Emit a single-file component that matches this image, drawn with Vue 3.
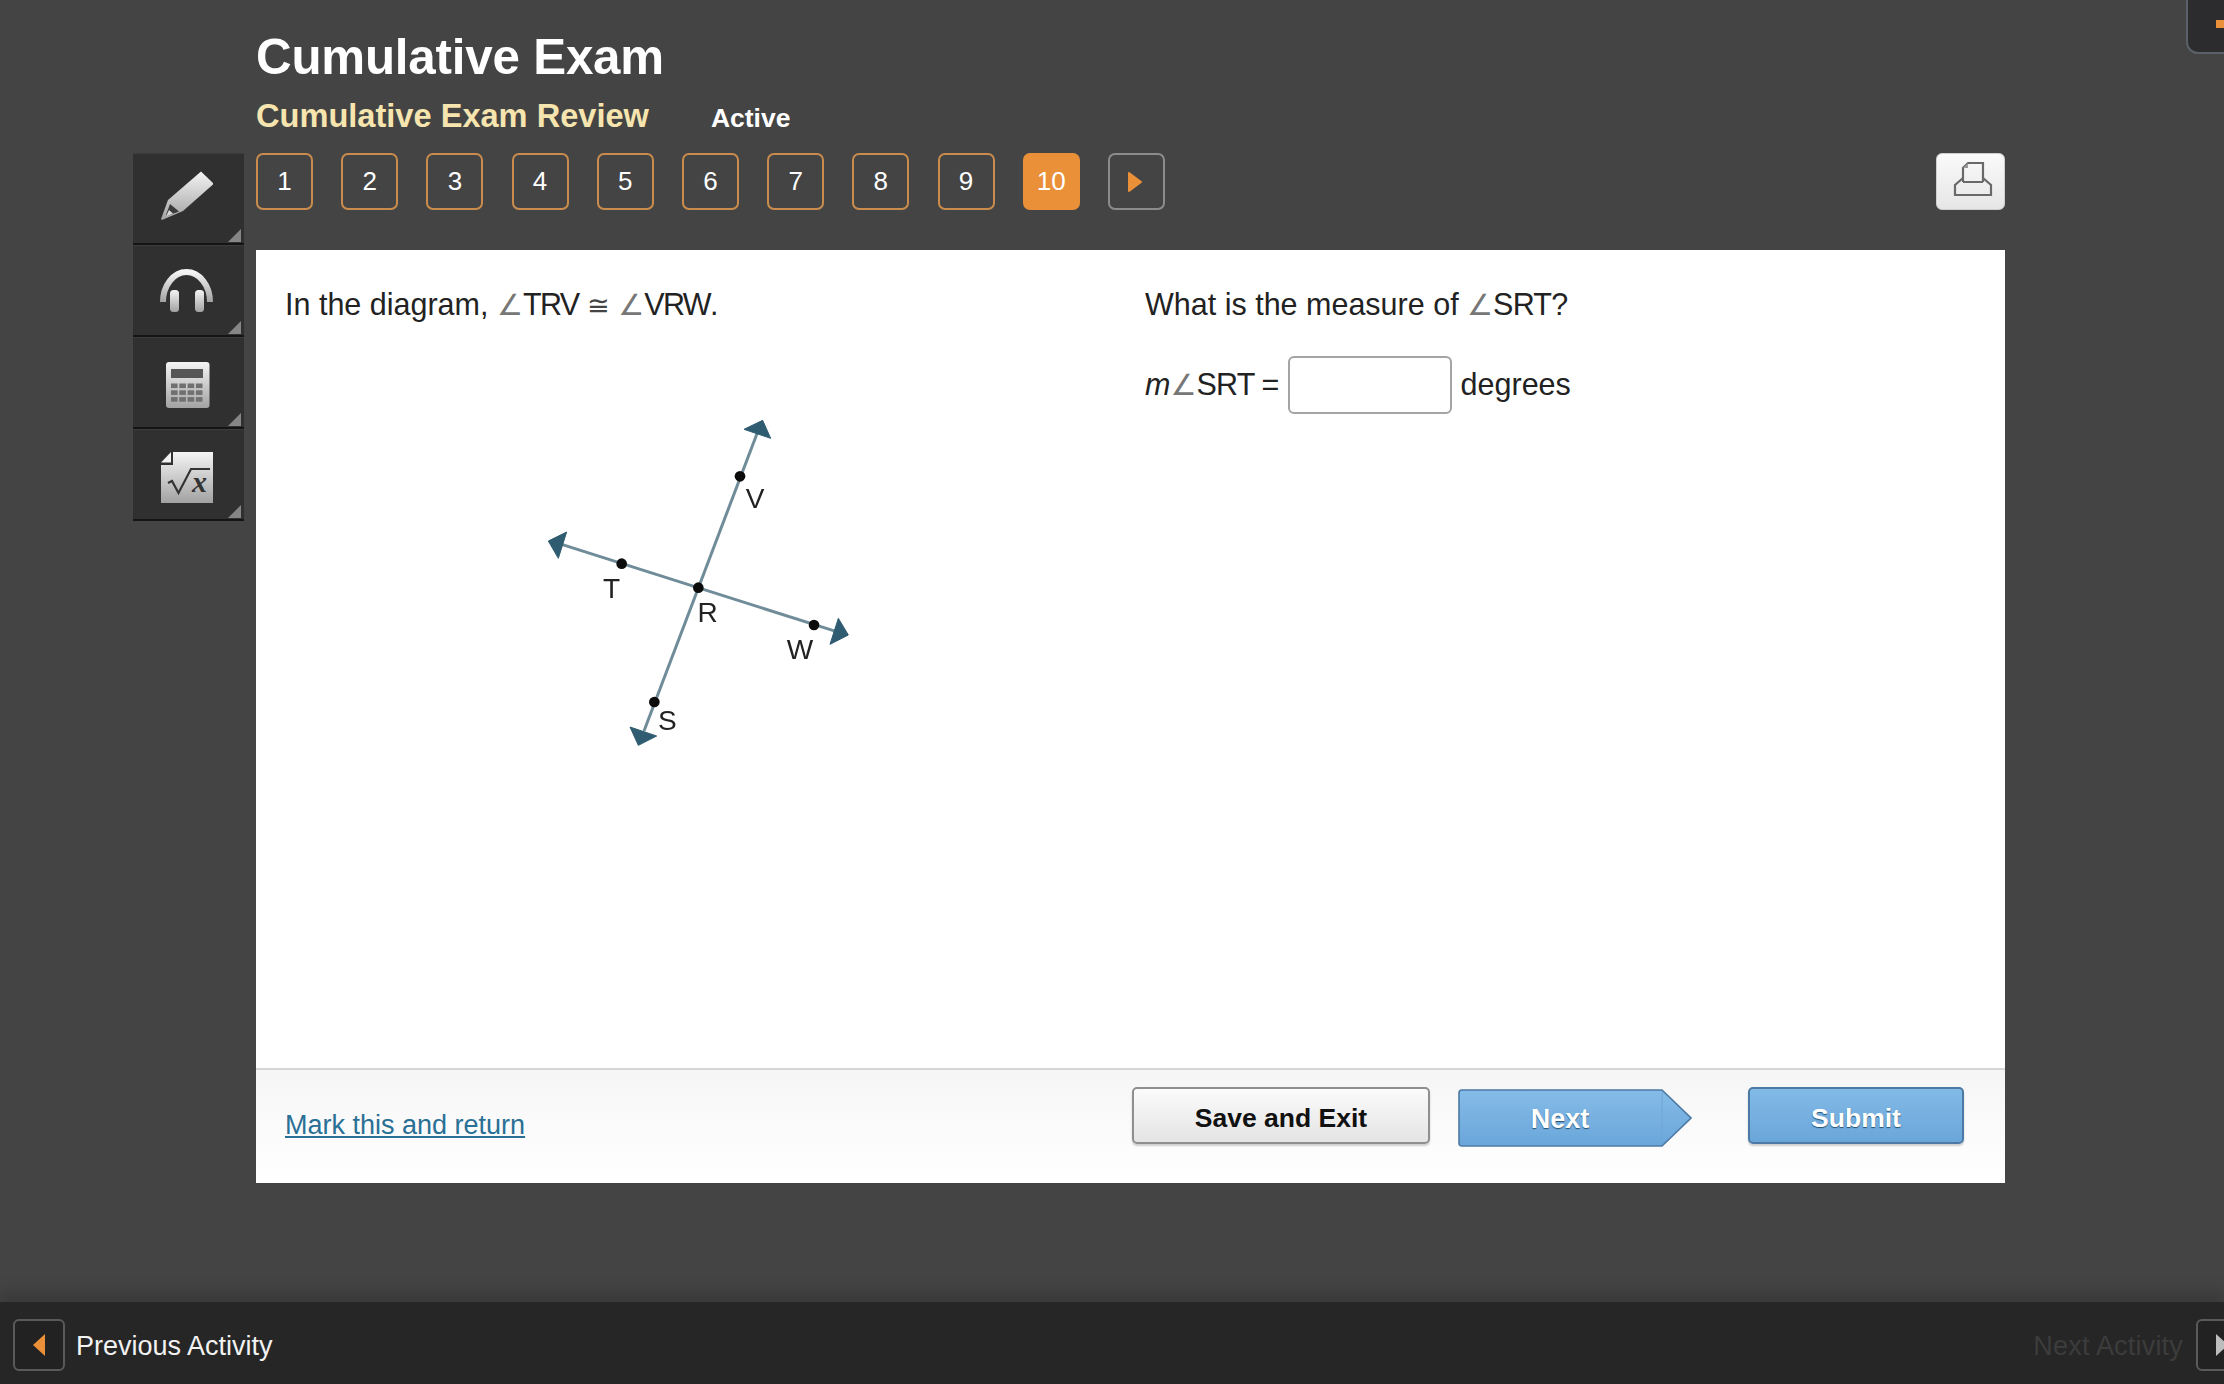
<script setup>
const questions = [1, 2, 3, 4, 5, 6, 7, 8, 9, 10]
const calcKeys = []
for (let r = 0; r < 3; r++) for (let c = 0; c < 4; c++) calcKeys.push({ x: 38 + c * 8.3, y: 46.5 + r * 6.8 })
</script>

<template>
  <div class="page">
    <div class="corner-tab"><span class="corner-dash"></span></div>

    <header class="header">
      <h1 class="title">Cumulative Exam</h1>
      <div class="subtitle-row">
        <span class="subtitle">Cumulative Exam Review</span>
        <span class="status">Active</span>
      </div>
    </header>

    <div class="workspace">
      <aside class="rail">
        <div class="tool">
          <svg viewBox="0 0 111 92" class="tool-icon">
            <defs>
              <linearGradient id="metal" x1="0" y1="0" x2="0" y2="1">
                <stop offset="0" stop-color="#f4f4f4" />
                <stop offset="1" stop-color="#a2a2a2" />
              </linearGradient>
            </defs>
            <path d="M68 18.5 L80 30 L80 31.5 L50 58 L29 67 L28 66 L35 47 Z" fill="url(#metal)" />
            <path d="M37 51 L46 58.5 L34 63 L33 62 Z" fill="#3a3a3a" />
            <path d="M36 57 L40 60.5 L33 63.5 Z" fill="#d8d8d8" />
          </svg>
          <span class="tool-corner"></span>
        </div>
        <div class="tool">
          <svg viewBox="0 0 111 92" class="tool-icon">
            <path d="M30 57 A23.5 30 0 0 1 77 57" fill="none" stroke="url(#metal)" stroke-width="6" />
            <rect x="37" y="45" width="9" height="22" rx="3.5" fill="url(#metal)" />
            <rect x="62" y="45" width="9" height="22" rx="3.5" fill="url(#metal)" />
          </svg>
          <span class="tool-corner"></span>
        </div>
        <div class="tool">
          <svg viewBox="0 0 111 92" class="tool-icon">
            <rect x="33" y="25" width="43.5" height="46" rx="3" fill="url(#metal)" />
            <rect x="38" y="32" width="32" height="9" fill="#565656" />
            <rect v-for="(k, i) in calcKeys" :key="i" :x="k.x" :y="k.y" width="6.6" height="4.6" fill="#707070" />
          </svg>
          <span class="tool-corner"></span>
        </div>
        <div class="tool">
          <svg viewBox="0 0 111 92" class="tool-icon">
            <path d="M40 23 H80 V74 H28 V36 H40 Z" fill="url(#metal)" />
            <path d="M28 33.5 L38 23 V33.5 Z" fill="#f2f2f2" />
            <path d="M35 54 L39 52 L45.5 64 L58 40 H77" fill="none" stroke="#333" stroke-width="2.2" />
            <text x="59" y="63" class="root-x">x</text>
          </svg>
          <span class="tool-corner"></span>
        </div>
      </aside>

      <main class="main">
        <nav class="nav">
          <button v-for="q in questions" :key="q" class="q-btn" :class="{ current: q === 10 }">{{ q }}</button>
          <button class="q-btn arrow-btn">
            <svg class="arrow-glyph" width="16" height="24" viewBox="0 0 16 24"><path d="M2 3 L14 12 L2 21 Z" fill="#ea9039" stroke="#ea9039" stroke-width="2" stroke-linejoin="round" /></svg>
          </button>
          <button class="print-btn">
            <svg width="69" height="57" viewBox="0 0 69 57" fill="none" stroke="#696969" stroke-width="2.2">
              <path d="M27 29 V15 L32 10 H47 V29" />
              <path d="M27 25 L19 32 V42 H55 V32 L47 25" />
              <path d="M27 29 H47" />
              <path d="M27 15 H32 V10 Z" fill="#9a9a9a" stroke="none" />
            </svg>
          </button>
        </nav>

        <section class="card">
          <div class="card-body">
            <div class="col-left">
              <p class="line">In the diagram, <span class="ang">∠</span><span class="tight">TRV</span> <span class="cong">≅</span> <span class="ang">∠</span><span class="tight">VRW</span>.</p>
              <svg class="diagram" viewBox="0 0 1080 1080" width="360" height="360">
                <g stroke="#6f8c98" stroke-width="9">
                  <line x1="125" y1="430" x2="950" y2="692" />
                  <line x1="712" y1="95" x2="372" y2="990" />
                </g>
                <g fill="#2f5c70" stroke="#2f5c70" stroke-width="3" stroke-linejoin="round">
                  <path d="M85 420 L140 393 L115 472 Z" />
                  <path d="M985 702 L955 652 L930 730 Z" />
                  <path d="M728 58 L752 112 L672 85 Z" />
                  <path d="M330 978 L410 1005 L355 1033 Z" />
                </g>
                <g fill="#0c0c0c">
                  <circle cx="660" cy="226" r="16" />
                  <circle cx="305" cy="488" r="16" />
                  <circle cx="535" cy="560" r="16" />
                  <circle cx="882" cy="672" r="16" />
                  <circle cx="403" cy="903" r="16" />
                </g>
                <g class="labels">
                  <text x="705" y="322">V</text>
                  <text x="275" y="590">T</text>
                  <text x="563" y="664">R</text>
                  <text x="840" y="774">W</text>
                  <text x="442" y="986">S</text>
                </g>
              </svg>
            </div>
            <div class="col-right">
              <p class="line">What is the measure of <span class="ang">∠</span><span class="tight-s">SRT?</span></p>
              <div class="answer">
                <span class="answer-text"><i>m</i><span class="ang">∠</span><span class="tight-s">SRT =</span></span>
                <input class="answer-input" type="text" />
                <span class="answer-text">degrees</span>
              </div>
            </div>
          </div>

          <footer class="card-foot">
            <a class="mark-link">Mark this and return</a>
            <div class="actions">
              <button class="btn btn-plain">Save and Exit</button>
              <button class="btn-next">
                <svg class="next-shape" viewBox="0 0 234 58" width="234" height="58">
                  <defs>
                    <linearGradient id="blue" x1="0" y1="0" x2="0" y2="1">
                      <stop offset="0" stop-color="#85bce8" />
                      <stop offset="1" stop-color="#6aa6da" />
                    </linearGradient>
                  </defs>
                  <path d="M4 1 H204 L233 29 L204 57 H4 Q1 57 1 54 V4 Q1 1 4 1 Z" fill="url(#blue)" stroke="#4c7aa5" stroke-width="1.6" />
                  <line x1="204" y1="3" x2="204" y2="55" stroke="#6fa5d6" stroke-width="1" />
                </svg>
                <span class="next-label">Next</span>
              </button>
              <button class="btn btn-blue">Submit</button>
            </div>
          </footer>
        </section>
      </main>
    </div>

    <div class="bottom-bar">
      <div class="activity">
        <span class="activity-btn">
          <svg width="14" height="24" viewBox="0 0 14 24"><path d="M13 1 V23 L1 12 Z" fill="#ea9039" /></svg>
        </span>
        <span class="activity-text">Previous Activity</span>
      </div>
      <div class="activity next-activity">
        <span class="activity-text faded">Next Activity</span>
        <span class="activity-btn">
          <svg width="14" height="24" viewBox="0 0 14 24"><path d="M1 1 V23 L13 12 Z" fill="#bdbdbd" /></svg>
        </span>
      </div>
    </div>
  </div>
</template>

<style>
html, body { margin: 0; background: #444; overflow: hidden; }
</style>

<style scoped>
.page {
  position: relative;
  width: 2224px;
  height: 1384px;
  background: #444;
  overflow: hidden;
  display: flex;
  flex-direction: column;
  font-family: "Liberation Sans", Arial, sans-serif;
  color: #222;
}
.corner-tab {
  position: absolute;
  top: -12px;
  right: -28px;
  width: 66px;
  height: 66px;
  box-sizing: border-box;
  background: #2c2c2e;
  border: 2px solid #5b616b;
  border-radius: 12px;
}
.corner-dash {
  position: absolute;
  left: 28px;
  top: 30px;
  width: 12px;
  height: 8px;
  background: #ea9039;
}
.header {
  height: 153px;
  box-sizing: border-box;
  padding: 25px 0 0 256px;
}
.title {
  margin: 0;
  font-size: 49.3px;
  line-height: 63px;
  font-weight: 700;
  color: #fff;
  letter-spacing: -0.2px;
}
.subtitle-row {
  display: flex;
  align-items: baseline;
  gap: 62px;
  margin-top: 10px;
}
.subtitle {
  font-size: 32.6px;
  line-height: 36px;
  font-weight: 700;
  color: #f6e5ae;
}
.status {
  font-size: 26.5px;
  font-weight: 700;
  color: #fff;
}
.workspace {
  display: flex;
  padding-left: 133px;
  gap: 12px;
}
.rail { width: 111px; flex: none; }
.tool {
  position: relative;
  height: 92px;
  box-sizing: border-box;
  background: #303030;
  border-bottom: 2px solid #141414;
  border-top: 1px solid #3c3c3c;
}
.tool-icon { display: block; width: 111px; height: 92px; margin-top: -1px; }
.tool-corner {
  position: absolute;
  right: 3px;
  bottom: 1px;
  width: 0;
  height: 0;
  border-left: 13px solid transparent;
  border-bottom: 13px solid #868686;
}
.root-x {
  font-family: "Liberation Serif", serif;
  font-style: italic;
  font-weight: 700;
  font-size: 30px;
  fill: #333;
}
.main { width: 1749px; flex: none; }
.nav {
  display: flex;
  gap: 28.2px;
  height: 57px;
  margin-bottom: 40px;
}
.q-btn {
  width: 57px;
  height: 57px;
  box-sizing: border-box;
  padding: 0;
  background: transparent;
  border: 2px solid #c98c4d;
  border-radius: 7px;
  color: #fff;
  font: 26px "Liberation Sans", Arial, sans-serif;
  display: flex;
  align-items: center;
  justify-content: center;
}
.q-btn.current { background: #ea9039; border-color: #ea9039; }
.arrow-btn { border-color: #8c8c8c; }
.arrow-glyph { margin-left: -2px; }
.print-btn {
  margin-left: auto;
  width: 69px;
  height: 57px;
  padding: 0;
  box-sizing: border-box;
  border: 1px solid #cfcfcf;
  border-radius: 6px;
  background: linear-gradient(#fafafa, #e6e6e6);
  overflow: hidden;
}
.print-btn svg { display: block; margin: -1px; }
.card { background: #fff; height: 933px; display: flex; flex-direction: column; }
.card-body {
  flex: 1;
  display: flex;
  padding: 36px 29px 0;
  min-height: 0;
}
.col-left { width: 860px; flex: none; }
.col-right { flex: 1; }
.line {
  margin: 0;
  font-size: 30.5px;
  line-height: 36px;
  color: #222;
}
.tight { letter-spacing: -1.6px; }
.tight-s { letter-spacing: -0.8px; }
.ang { color: #777; font-family: "DejaVu Sans", sans-serif; font-size: 29px; }
.cong { font-family: "DejaVu Sans", sans-serif; font-size: 27px; color: #444; }
.diagram { display: block; margin: 76.5px 0 0 235px; filter: blur(0.4px); }
.labels text {
  font-family: "Liberation Sans", Arial, sans-serif;
  font-size: 84px;
  fill: #222;
  text-anchor: middle;
}
.answer {
  display: flex;
  align-items: center;
  gap: 9px;
  margin-top: 33px;
  font-size: 30.5px;
  color: #222;
}
.answer-text { padding-bottom: 2px; }
.answer-input {
  width: 164px;
  height: 58px;
  box-sizing: border-box;
  border: 2px solid #a4a4a4;
  border-radius: 6px;
  background: #fff;
  padding: 0;
}
.card-foot {
  height: 115px;
  box-sizing: border-box;
  flex: none;
  border-top: 2px solid #d6d6d6;
  background: linear-gradient(#f6f6f6, #fff);
  display: flex;
  padding: 0 41px 0 29px;
  justify-content: space-between;
}
.mark-link {
  margin-top: 38px;
  font-size: 27px;
  line-height: 34px;
  color: #2a7096;
  text-decoration: underline;
}
.actions { display: flex; gap: 28px; align-items: flex-start; padding-top: 17px; }
.btn {
  height: 57px;
  box-sizing: border-box;
  border-radius: 5px;
  font: 700 26.5px "Liberation Sans", Arial, sans-serif;
  padding: 5px 0 0;
  box-shadow: 0 2px 2px rgba(0, 0, 0, 0.18);
}
.btn-plain {
  width: 298px;
  background: linear-gradient(#fbfbfb, #e4e4e4);
  border: 2px solid #8f8f8f;
  color: #111;
}
.btn-next {
  position: relative;
  width: 234px;
  height: 58px;
  margin: 2px 28px 0 0;
  padding: 2px 0 0;
  border: 0;
  background: none;
  font: 700 27px "Liberation Sans", Arial, sans-serif;
}
.next-shape { position: absolute; left: 0; top: 0; }
.next-label {
  position: relative;
  display: block;
  width: 204px;
  color: #fff;
  text-shadow: 0 1px 1px #24506f;
}
.btn-blue {
  width: 216px;
  background: linear-gradient(#82bae7, #6ba6da);
  border: 2px solid #4c7aa5;
  color: #fff;
  text-shadow: 0 1px 1px #24506f;
}
.bottom-bar {
  position: absolute;
  left: 0;
  right: 0;
  bottom: 0;
  height: 82px;
  background: #262626;
  box-shadow: 0 -10px 12px #3a3a3a;
  display: flex;
  justify-content: space-between;
  align-items: flex-start;
  padding-top: 17px;
  box-sizing: border-box;
}
.activity { display: flex; align-items: center; gap: 11px; padding-left: 13px; }
.next-activity { padding: 0; margin-right: -24px; gap: 13px; }
.activity-btn {
  width: 52px;
  height: 52px;
  box-sizing: border-box;
  border: 2px solid #5a5a5a;
  border-radius: 6px;
  background: #222;
  display: flex;
  align-items: center;
  justify-content: center;
}
.activity-text { font-size: 27px; color: #f2f2f2; padding-top: 3px; }
.activity-text.faded { color: #3c3c3c; letter-spacing: 0.2px; }
</style>
